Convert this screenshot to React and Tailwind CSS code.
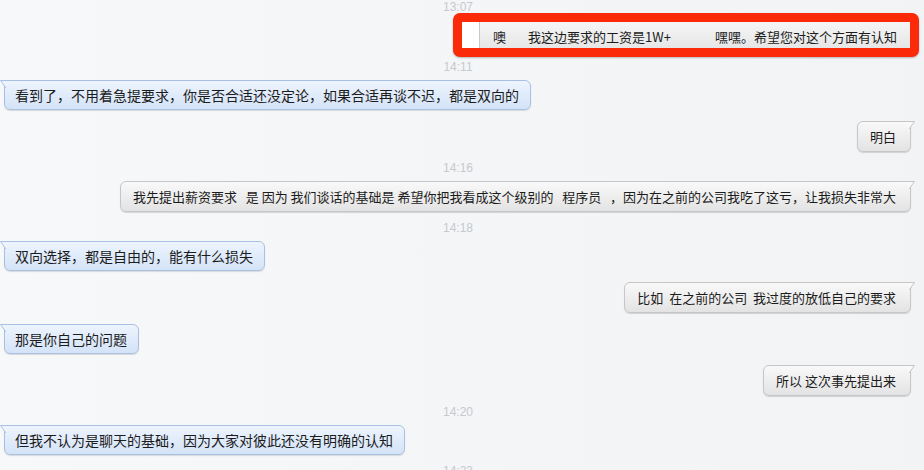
const messages = [
  { type: 'time', text: '14:11' },
  { type: 'in', text: '看到了，不用着急提要求，你是否合适还没定论，如果合适再谈不迟，都是双向的' },
  { type: 'out', text: '明白' },
  { type: 'time', text: '14:16' },
  {
    type: 'out',
    text: '我先提出薪资要求   是 因为 我们谈话的基础是 希望你把我看成这个级别的   程序员   ，因为在之前的公司我吃了这亏，让我损失非常大',
  },
  { type: 'time', text: '14:18' },
  { type: 'in', text: '双向选择，都是自由的，能有什么损失' },
  { type: 'out', text: '比如  在之前的公司  我过度的放低自己的要求' },
  { type: 'in', text: '那是你自己的问题' },
  { type: 'out', text: '所以 这次事先提出来' },
  { type: 'time', text: '14:20' },
  { type: 'in', text: '但我不认为是聊天的基础，因为大家对彼此还没有明确的认知' },
  { type: 'time', text: '14:23' },
];

const cjk = { fontFamily: '"Noto Sans CJK SC", "Liberation Sans", sans-serif' };

const Time = ({ text, first }) => (
  <div
    className={`${first ? '' : '-mt-[2px]'} mb-[6px] h-[14px] pr-[8px] text-center text-[12px] leading-[14px] text-[#c6c9ce]`}
    style={{ fontFamily: '"Liberation Sans", sans-serif' }}
  >
    {text}
  </div>
);

const Tail = ({ side, fill, stroke }) =>
  side === 'left' ? (
    <svg className="absolute left-[-5px] top-[-1px]" width="7" height="9" viewBox="0 0 7 9">
      <path d="M7 0.5 L0.5 0.5 L6 8 L7 8 Z" fill={fill} />
      <path d="M7 0.5 L0.5 0.5 L6 8" fill="none" stroke={stroke} strokeWidth="1" />
    </svg>
  ) : (
    <svg className="absolute right-[-5px] top-[-1px]" width="7" height="9" viewBox="0 0 7 9">
      <path d="M0 0.5 L6.5 0.5 L1 8 L0 8 Z" fill={fill} />
      <path d="M0 0.5 L6.5 0.5 L1 8" fill="none" stroke={stroke} strokeWidth="1" />
    </svg>
  );

const Incoming = ({ text }) => (
  <div className="mb-[11px] flex justify-start pl-[4px]">
    <div
      className="relative flex h-[30px] items-center whitespace-pre rounded-[6px] rounded-tl-none border border-[#a9c1e0] bg-gradient-to-b from-[#edf4fe] to-[#d4e3f7] pl-[10px] pr-[11px] text-[14px] text-[#1c1c1c] shadow-[0_1px_1px_rgba(0,0,0,0.12)]"
      style={cjk}
    >
      <Tail side="left" fill="#edf4fe" stroke="#a9c1e0" />
      {text}
    </div>
  </div>
);

const Outgoing = ({ text }) => (
  <div className="mb-[11px] flex justify-end pr-[13px]">
    <div
      className="relative flex h-[31px] items-center whitespace-pre rounded-[6px] rounded-tr-none border border-[#c6c6c6] bg-gradient-to-b from-[#f9f9f9] to-[#e3e3e3] pl-[12px] pr-[14px] text-[13px] text-[#1c1c1c] shadow-[0_1px_1px_rgba(0,0,0,0.14)]"
      style={cjk}
    >
      <Tail side="right" fill="#f9f9f9" stroke="#c6c6c6" />
      {text}
    </div>
  </div>
);

export default function App() {
  return (
    <div className="h-[470px] w-[924px] overflow-hidden bg-gradient-to-r from-[#f7f8f9] to-[#f2f3f5]">
      <Time text="13:07" first />
      <div className="-mt-[7px] mb-[5px] flex justify-end pr-[5px]">
        <div className="flex h-[44px] w-[466px] overflow-hidden rounded-[7px] border-[9px] border-[#fb2a08] bg-white shadow-[0_1px_2px_rgba(0,0,0,0.25)]">
          <div className="w-[17px] bg-white" />
          <div
            className="flex flex-1 items-center border-l border-[#c9c9c9] bg-gradient-to-b from-[#f6f6f6] to-[#e6e6e6] pl-[13px] pt-[4px] text-[13px] text-[#1c1c1c]"
            style={cjk}
          >
            <span>噢</span>
            <span className="ml-[22px]">我这边要求的工资是1W+</span>
            <span className="ml-[44px]">嘿嘿。希望您对这个方面有认知</span>
          </div>
        </div>
      </div>
      {messages.map((m, i) =>
        m.type === 'time' ? (
          <Time key={i} text={m.text} />
        ) : m.type === 'in' ? (
          <Incoming key={i} text={m.text} />
        ) : (
          <Outgoing key={i} text={m.text} />
        )
      )}
    </div>
  );
}
